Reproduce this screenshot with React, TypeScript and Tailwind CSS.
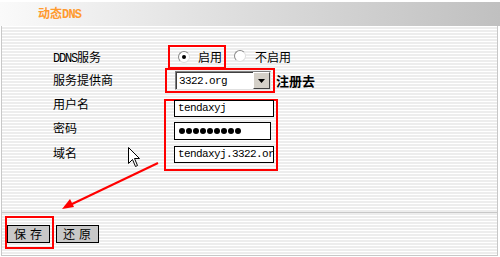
import React from 'react';

const stripes =
  'bg-[repeating-linear-gradient(to_bottom,#ffffff_0px,#ffffff_1px,#ededed_1px,#ededed_3px)]';

function Radio({ checked }: { checked?: boolean }) {
  return (
    <span className="inline-flex w-[12px] h-[12px] rounded-full bg-white border border-[#8a8a8a] border-r-[#e0e0e0] border-b-[#e0e0e0] items-center justify-center">
      {checked && <span className="w-[4px] h-[4px] rounded-full bg-black" />}
    </span>
  );
}

function Field({ children, w }: { children: React.ReactNode; w: string }) {
  return (
    <div
      className={`h-[17px] ${w} bg-white border border-black flex items-center pl-[3px] font-['Liberation_Mono',monospace] text-[11px] tracking-[-0.6px] text-black overflow-hidden whitespace-nowrap`}
    >
      {children}
    </div>
  );
}

export default function App() {
  const labels = ['服务提供商', '用户名', '密码', '域名'];
  return (
    <div className="relative w-[500px] h-[257px] bg-white overflow-hidden font-['Noto_Sans_CJK_SC',sans-serif] text-[12px] text-black">
      <div className="h-[2px] bg-white" />
      {/* Title bar */}
      <div className="h-[24px] bg-gradient-to-r from-[#fafafa] via-[#dcdcdc] to-[#c0c0c0] pl-[38px] flex items-center">
        <span className="font-bold text-[#ff9a2e] text-[12px]">
          动态<span className="font-['Liberation_Mono',monospace] text-[12px] tracking-[-0.8px]">DNS</span>
        </span>
      </div>

      <div className={`ml-[1px] mr-[2px] h-[230px] border-l border-r border-[#c8c8c8] ${stripes} flex flex-col`}>
        {/* Form */}
        <div className="h-[187px] flex border-b border-[#c8c8c8]">
          <div className="w-[162px] pl-[51px] flex flex-col">
            <div className="mt-[23px] h-[16px] leading-[16px]">
              <span className="font-['Liberation_Mono',monospace] text-[12px] tracking-[-1.2px]">DDNS</span>服务
            </div>
            {labels.map((l, i) => (
              <div
                key={l}
                className={`h-[16px] leading-[16px] ${i === 0 ? 'mt-[7px]' : i === 3 ? 'mt-[9px]' : 'mt-[8px]'}`}
              >
                {l}
              </div>
            ))}
          </div>

          <div className="flex flex-col">
            {/* DDNS service radios */}
            <div className="mt-[19px] flex items-center">
              <div className="ml-[4px] w-[58px] h-[24px] border-2 border-[#ff0000] flex items-center pl-[8px] gap-[8px]">
                <Radio checked />
                <span>启用</span>
              </div>
              <span className="ml-[8px] mr-[9px]">
                <Radio />
              </span>
              <span>不启用</span>
            </div>

            {/* Provider select */}
            <div className="mt-[-1px] flex items-center">
              <div className="ml-[1px] w-[110px] h-[25px] border-2 border-[#ff0000] pl-[8px] pt-[1px]">
                <div className="w-[96px] h-[19px] bg-white border border-[#808080] border-r-[#e0e0e0] border-b-[#e0e0e0] flex">
                  <div className="flex-1 border-l border-t border-[#404040] pl-[2px] leading-[17px] font-['Liberation_Mono',monospace] text-[11px] tracking-[-0.6px]">
                    3322.org
                  </div>
                  <div className="w-[17px] bg-[#d4d0c8] border border-[#ffffff] border-r-[#404040] border-b-[#404040] flex items-center justify-center">
                    <svg width="7" height="4" viewBox="0 0 7 4">
                      <path d="M0 0h7L3.5 4z" fill="#000" />
                    </svg>
                  </div>
                </div>
              </div>
              <span className="ml-[1px] font-bold text-[13px]">注册去</span>
            </div>

            {/* Account group */}
            <div className="mt-[6px] w-[114px] h-[72px] border-2 border-[#ff0000] pl-[8px] flex flex-col">
              <div className="mt-[-1px]">
                <Field w="w-[100px]">tendaxyj</Field>
              </div>
              <div className="mt-[5px] h-[18px] w-[97px] bg-white border border-black flex items-center pl-[4px] gap-[1px]">
                {Array.from({ length: 9 }).map((_, i) => (
                  <span key={i} className="w-[6px] h-[6px] rounded-full bg-black" />
                ))}
              </div>
              <div className="mt-[6px]">
                <Field w="w-[100px]">tendaxyj.3322.or</Field>
              </div>
            </div>
          </div>
        </div>

        {/* Buttons */}
        <div className="flex items-start pl-[3px] pt-[3px] flex-1 border-b border-[#c8c8c8]">
          <div className="w-[49px] h-[33px] border-2 border-[#ff0000] pt-[7px]">
            <button className="w-[43px] h-[18px] bg-[#c8c8c8] border border-black leading-[16px] tracking-[4px] pl-[3px]">
              保存
            </button>
          </div>
          <button className="ml-[2px] mt-[9px] w-[43px] h-[18px] bg-[#c8c8c8] border border-black leading-[16px] tracking-[4px] pl-[3px]">
            还原
          </button>
        </div>
      </div>

      {/* Annotation arrow */}
      <svg className="absolute left-0 top-0 pointer-events-none" width="500" height="257">
        <line x1="158" y1="163" x2="70" y2="205" stroke="#ff0000" strokeWidth="2" />
        <path d="M62 209 L70 199 L74 207 Z" fill="#ff0000" />
      </svg>

      {/* Mouse cursor */}
      <svg className="absolute left-[128px] top-[147px]" width="13" height="21" viewBox="0 0 13 21">
        <path
          d="M0.5 0.5 V16.5 L4.5 12.5 L7.5 19.5 L9.5 18.5 L6.5 11.5 H11.5 Z"
          fill="#fff"
          stroke="#000"
          strokeWidth="1"
        />
      </svg>
    </div>
  );
}
